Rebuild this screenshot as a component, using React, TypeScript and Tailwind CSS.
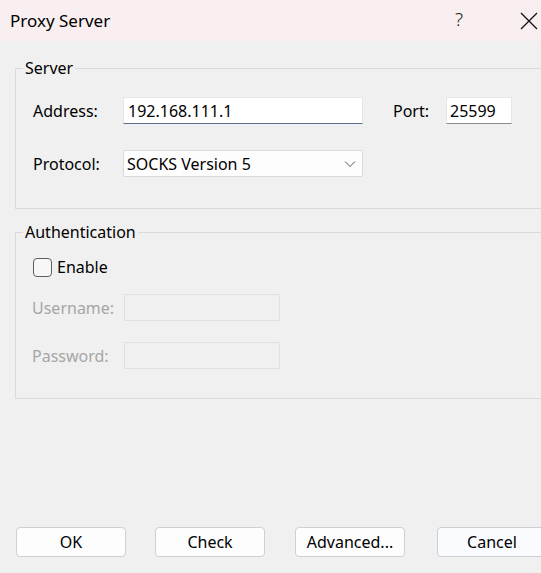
import React from "react";

export default function App() {
  const font = { fontFamily: '"Noto Sans", "Segoe UI", sans-serif' };
  return (
    <div
      className="w-[541px] h-[573px] overflow-hidden bg-[#f0f0f0] text-black flex flex-col text-[16px]"
      style={font}
    >
      {/* Title bar */}
      <div className="h-[41px] shrink-0 bg-[#f9eff0] flex items-center pl-[10px] relative">
        <span className="text-[17px] leading-none">Proxy Server</span>
        <span className="absolute left-[455px] top-[10px] text-[19px] leading-none text-[#222] font-light">?</span>
        <svg className="absolute left-[520px] top-[12px]" width="18" height="18" viewBox="0 0 18 18">
          <path d="M1 1 L17 17 M17 1 L1 17" stroke="#111" strokeWidth="1.3" fill="none" />
        </svg>
      </div>

      {/* Server group */}
      <fieldset className="mt-[16px] ml-[15px] w-[540px] shrink-0 border border-[#dadada]">
        <legend className="ml-[7px] px-[2px] leading-[22px]">Server</legend>
        <div className="pt-[18px] pb-[31px] pl-[17px]">
          <div className="flex items-center h-[27px]">
            <span className="w-[90px]">Address:</span>
            <div className="w-[240px] h-[27px] bg-white border border-[#e6e6e6] border-b-[#5a6f8c] flex items-center pl-[4px]">
              192.168.111.1
            </div>
            <span className="ml-[30px] w-[53px]">Port:</span>
            <div className="w-[66px] h-[27px] bg-white border border-[#e6e6e6] border-b-[#8a8a8a] flex items-center pl-[3px]">
              25599
            </div>
          </div>
          <div className="flex items-center h-[27px] mt-[26px]">
            <span className="w-[90px]">Protocol:</span>
            <div className="w-[240px] h-[27px] bg-[#fdfdfd] border border-[#d9d9d9] rounded-[2px] flex items-center pl-[3px] pr-[6px] justify-between">
              <span>SOCKS Version 5</span>
              <svg width="12" height="8" viewBox="0 0 12 8">
                <path d="M1 1.5 L6 6.5 L11 1.5" stroke="#555" strokeWidth="1" fill="none" />
              </svg>
            </div>
          </div>
        </div>
      </fieldset>

      {/* Authentication group */}
      <fieldset className="mt-[12px] ml-[15px] w-[540px] shrink-0 border border-[#dadada]">
        <legend className="ml-[7px] px-[2px] leading-[22px]">Authentication</legend>
        <div className="pt-[13px] pb-[29px] pl-[17px]">
          <div className="flex items-center h-[22px]">
            <div className="w-[19px] h-[19px] rounded-[4px] border border-[#5f5f5f] bg-[#f7f7f7]" />
            <span className="ml-[5px]">Enable</span>
          </div>
          <div className="flex items-center h-[27px] mt-[16px]">
            <span className="w-[92px] -ml-[1px] text-[#a6a6a6]">Username:</span>
            <div className="w-[156px] h-[27px] border border-[#e0e0e0]" />
          </div>
          <div className="flex items-center h-[27px] mt-[21px]">
            <span className="w-[92px] -ml-[1px] text-[#a6a6a6]">Password:</span>
            <div className="w-[156px] h-[27px] border border-[#e0e0e0]" />
          </div>
        </div>
      </fieldset>

      <div className="flex-1" />

      {/* Buttons */}
      <div className="flex items-center pl-[16px] pb-[16px] shrink-0">
        <button className="shrink-0 w-[110px] h-[30px] bg-[#fdfdfd] border border-[#d0d0d0] rounded-[4px]">OK</button>
        <button className="shrink-0 ml-[29px] w-[110px] h-[30px] bg-[#fdfdfd] border border-[#d0d0d0] rounded-[4px]">Check</button>
        <button className="shrink-0 ml-[30px] w-[110px] h-[30px] bg-[#fdfdfd] border border-[#d0d0d0] rounded-[4px]">Advanced...</button>
        <button className="shrink-0 ml-[32px] w-[110px] h-[30px] bg-[#f9fbfe] border border-[#ccd0d6] rounded-[4px]">Cancel</button>
      </div>
    </div>
  );
}
